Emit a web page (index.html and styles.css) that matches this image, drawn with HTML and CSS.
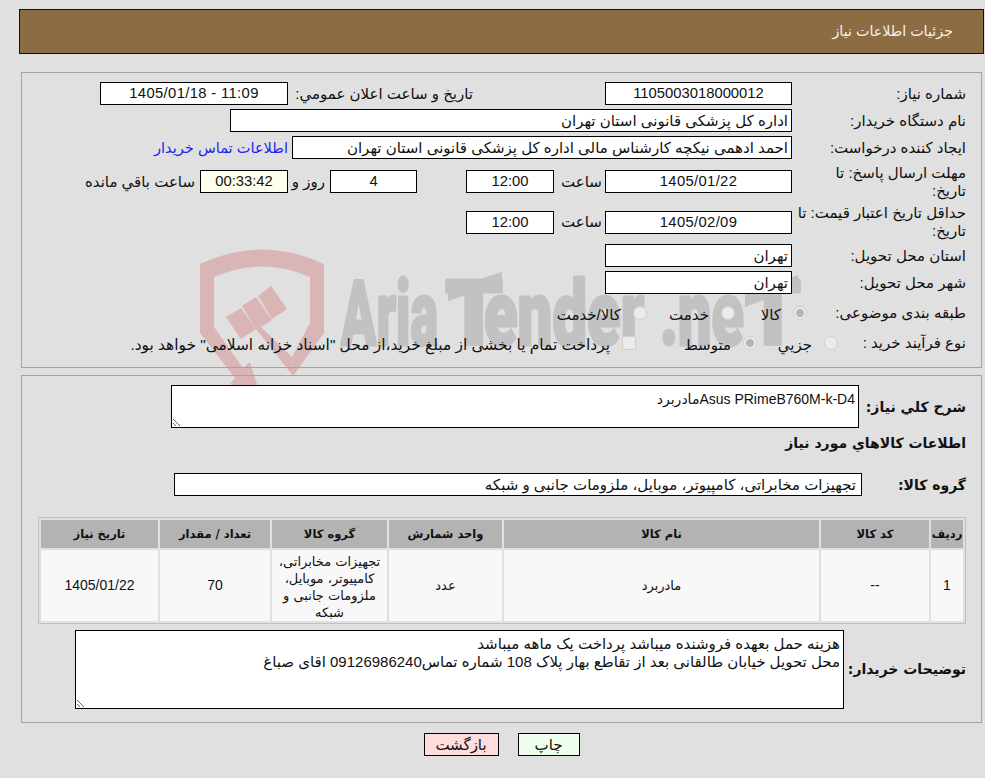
FILE: index.html
```html
<!DOCTYPE html>
<html lang="fa" dir="rtl">
<head>
<meta charset="utf-8">
<title>جزئیات اطلاعات نیاز</title>
<link rel="stylesheet" href="styles.css">
</head>
<body>
<svg class="watermark" width="985" height="778" viewBox="0 0 985 778" aria-hidden="true">
  <path class="wm-red" d="M200 264Q262 235 324 264V333L293 376L292 357L310 323V277Q262 256 214 277V327L243 368L250 362L262 400L230 384L235 378L200 333Z"/>
  <path class="wm-red" d="M226 317L241 308L256 329L241 339Z"/>
  <path class="wm-red" d="M258 296L271 286L287 309L272 319Z"/>
  <path class="wm-red" d="M242 306L256 297L272 320L261 327L292 357L293 376L256 329Z"/>
  <text class="wm-text" x="341" y="345" textLength="97" lengthAdjust="spacingAndGlyphs">Aria</text>
  <text class="wm-text" x="445" y="345" textLength="58" lengthAdjust="spacingAndGlyphs">T</text>
  <text class="wm-text" x="484" y="345" textLength="160" lengthAdjust="spacingAndGlyphs">ender</text>
  <text class="wm-text" x="660" y="345" textLength="84" lengthAdjust="spacingAndGlyphs">.ne</text>
  <text class="wm-text" x="745" y="345" textLength="56" lengthAdjust="spacingAndGlyphs">T</text>
  <path class="wm-gray" d="M448 289L502 272V284L448 301Z"/>
  <path class="wm-gray" d="M745 295L798 275V287L745 307Z"/>
</svg>

<header class="title-bar">جزئیات اطلاعات نیاز</header>

<section class="panel panel-form">
  <div class="lbl c-label r1">شماره نياز:</div>
  <div class="field num c-date r1">1105003018000012</div>
  <div class="lbl r1 c-pub">تاریخ و ساعت اعلان عمومي:</div>
  <div class="field num date c-pubdate r1">1405/01/18 - 11:09</div>

  <div class="lbl c-label r2">نام دستگاه خریدار:</div>
  <div class="field text c-org r2">اداره کل پزشکی قانونی استان تهران</div>

  <div class="lbl c-label r3">ایجاد کننده درخواست:</div>
  <div class="field text c-creator r3">احمد ادهمی نیکچه کارشناس مالی اداره کل پزشکی قانونی استان تهران</div>
  <a class="contact r3" href="#">اطلاعات تماس خریدار</a>

  <div class="lbl c-label r4">مهلت ارسال پاسخ: تا<br>تاریخ:</div>
  <div class="field num date c-date r4">1405/01/22</div>
  <div class="lbl c-hour r4">ساعت</div>
  <div class="field num c-time r4">12:00</div>
  <div class="field num c-days r4">4</div>
  <div class="lbl c-rooz r4">روز و</div>
  <div class="field num c-h r4 remain">00:33:42</div>
  <div class="lbl c-rest r4">ساعت باقي مانده</div>

  <div class="lbl c-label r5">حداقل تاریخ اعتبار قیمت: تا<br>تاریخ:</div>
  <div class="field num date c-date r5">1405/02/09</div>
  <div class="lbl c-hour r5">ساعت</div>
  <div class="field num c-time r5">12:00</div>

  <div class="lbl c-label r6">استان محل تحویل:</div>
  <div class="field text c-date r6">تهران</div>
  <div class="lbl c-label r7">شهر محل تحویل:</div>
  <div class="field text c-date r7">تهران</div>

  <div class="lbl c-label r8">طبقه بندی موضوعی:</div>
  <div class="options opts-top r8">
    <label class="opt opt-kala"><input class="radio" type="radio" name="cat" checked disabled><span>کالا</span></label>
    <label class="opt opt-khedmat"><input class="radio" type="radio" name="cat" disabled><span>خدمت</span></label>
    <label class="opt"><input class="radio" type="radio" name="cat" disabled><span>کالا/خدمت</span></label>
  </div>

  <div class="lbl c-label r9">نوع فرآیند خرید :</div>
  <div class="options opts-bottom r9">
    <label class="opt opt-jozi"><input class="radio" type="radio" name="proc" disabled><span>جزيي</span></label>
    <label class="opt opt-motavaset"><input class="radio" type="radio" name="proc" checked disabled><span>متوسط</span></label>
    <label class="opt opt-treasury"><input class="check" type="checkbox" disabled><span>پرداخت تمام یا بخشی از مبلغ خرید،از محل "اسناد خزانه اسلامی" خواهد بود.</span></label>
  </div>
</section>

<section class="panel panel-items">
  <div class="item-row desc-row">
    <div class="lbl-b">شرح كلي نياز:</div>
    <textarea class="area area-desc" readonly>Asus PRimeB760M-k-D4مادربرد</textarea>
  </div>
  <h2 class="lbl-b section-title">اطلاعات کالاهاي مورد نياز</h2>
  <div class="item-row group-row">
    <div class="lbl-b">گروه کالا:</div>
    <div class="field text group-field">تجهیزات مخابراتی، کامپیوتر، موبایل، ملزومات جانبی و شبکه</div>
  </div>
  <table class="items">
    <thead>
      <tr><th class="w-rad">ردیف</th><th class="w-code">کد کالا</th><th class="w-name">نام کالا</th><th class="w-unit">واحد شمارش</th><th class="w-group">گروه کالا</th><th class="w-qty">تعداد / مقدار</th><th class="w-date">تاریخ نیاز</th></tr>
    </thead>
    <tbody>
      <tr><td class="n">1</td><td class="n">--</td><td>مادربرد</td><td>عدد</td><td class="group-cell">تجهیزات مخابراتی، کامپیوتر، موبایل، ملزومات جانبی و شبکه</td><td class="n">70</td><td class="n">1405/01/22</td></tr>
    </tbody>
  </table>
  <div class="item-row note-row">
    <div class="lbl-b">توضیحات خریدار:</div>
    <textarea class="area area-note" readonly>هزینه حمل بعهده فروشنده میباشد پرداخت یک ماهه میباشد
محل تحویل خیابان طالقانی بعد از تقاطع بهار پلاک 108 شماره تماس09126986240 اقای صباغ</textarea>
  </div>
</section>

<div class="actions">
  <button class="btn btn-print" type="button">چاپ</button>
  <button class="btn btn-back" type="button">بازگشت</button>
</div>
</body>
</html>
```
FILE: styles.css
```css
* { box-sizing: border-box; }
html, body { margin: 0; padding: 0; }
body {
  position: relative;
  height: 778px;
  overflow: hidden;
  background: #e0e0e0;
  color: #111;
  font: 15px/18px "Liberation Sans", "DejaVu Sans", sans-serif;
}
.watermark { position: absolute; left: 0; top: 0; z-index: -1; direction: ltr; }
.wm-red { fill: #d9b5b6; }
.wm-gray { fill: #c2c2c2; }
.wm-text { fill: #c2c2c2; stroke: #c2c2c2; stroke-width: 3px; stroke-linejoin: round; font: 900 90px Roboto, sans-serif; }

.title-bar {
  margin: 9px 1px 0 19px;
  height: 45px;
  padding: 0 30px 0 0;
  background: #8c6c42;
  border: 1px solid #111;
  color: #f4f1ea;
  font-size: 14.3px;
  line-height: 43px;
}
.panel {
  margin: 0 3px 0 21px;
  border: 1px solid #a3a3a3;
  padding-right: 15px;
}
.panel-form {
  margin-top: 18px;
  height: 296px;
  padding-top: 9px;
  display: grid;
  grid-template-columns: 174px 187px 51px 88px 49px 87px 42px 88px 1fr;
  grid-template-rows: 23px 23px 23px 37px 36px 23px 23px 30px 22px;
  row-gap: 4px;
  align-items: center;
}
.r1 { grid-row: 1; } .r2 { grid-row: 2; } .r3 { grid-row: 3; }
.r4 { grid-row: 4; } .r5 { grid-row: 5; } .r6 { grid-row: 6; }
.r7 { grid-row: 7; } .r8 { grid-row: 8; } .r9 { grid-row: 9; }
.c-label { grid-column: 1; white-space: nowrap; }
.c-date { grid-column: 2; }
.c-hour { grid-column: 3; text-align: center; padding-left: 4px; }
.c-time { grid-column: 4; }
.c-days { grid-column: 6; }
.c-rooz { grid-column: 7; padding-right: 5px; white-space: nowrap; }
.c-h { grid-column: 8; }
.c-rest { grid-column: 9; padding-right: 5px; white-space: nowrap; }
.c-pub { grid-column: 3 / 8; padding-right: 132px; white-space: nowrap; }
.c-pubdate { grid-column: 8 / 10; margin-left: 78px; }
.c-org { grid-column: 2 / 10; margin-left: 208px; }
.c-creator { grid-column: 2 / 8; margin-left: 4px; }
.contact { grid-column: 8 / 10; color: #1e1ef0; font-size: 14.6px; text-decoration: none; white-space: nowrap; }

.field {
  height: 23px;
  background: #fff;
  border: 1px solid #000;
  white-space: nowrap;
  overflow: hidden;
}
.num { font-size: 14.8px; line-height: 21px; text-align: center; direction: ltr; }
.date { letter-spacing: .35px; }
.text { line-height: 21px; padding: 0 3px; }
.remain { background: #ffffee; }

.options { display: flex; grid-column: 1 / -1; align-items: center; }
.opts-top { grid-column: 2 / -1; margin-right: -15px; }
.opts-bottom { margin-right: 128px; }
.opt { display: flex; align-items: center; gap: 12px; white-space: nowrap; }
.opt span { margin-top: 3px; }
.opt-kala { width: 72px; }
.opt-khedmat { width: 88px; }
.opt-jozi { width: 81px; }
.opt-motavaset { width: 121px; }
.opt-treasury span { font-size: 15.4px; }
.radio, .check {
  appearance: none;
  flex: none;
  width: 14px;
  height: 14px;
  margin: 0;
  background: #ebebeb;
  border: 1px solid #cfcfcf;
}
.radio { border-radius: 50%; }
.radio:checked { background: radial-gradient(circle, #b5b5b5 0 3.5px, #ebebeb 4.5px); }
.check { border-radius: 2px; }

.panel-items { margin-top: 7px; height: 348px; padding: 9px 15px 0 16px; }
.lbl-b { font: 700 14px/20px "DejaVu Sans", sans-serif; color: #111; white-space: nowrap; }
.item-row { display: flex; align-items: center; }
.desc-row { height: 43px; gap: 5px; }
.desc-row .lbl-b { width: 102px; }
.section-title { margin: 5px 0 0; height: 20px; }
.group-row { margin-top: 20px; height: 23px; }
.group-row .lbl-b { width: 104px; }
.group-field { width: 688px; padding-right: 5px; }
.area {
  display: block;
  background: #fff;
  border: 1px solid #000;
  border-radius: 0;
  font: 15px/18px "Liberation Sans", "DejaVu Sans", sans-serif;
  color: #111;
  padding: 4px 3px 3px;
  margin: 0;
  outline: none;
}
.area-desc { width: 688px; height: 43px; font-size: 14px; }
.area-note { width: 769px; height: 79px; }
.items {
  display: table;
  margin: 21px 0 0 0;
  width: 928px;
  border: 1px solid #c0c0c0;
  border-spacing: 2px;
  table-layout: fixed;
  text-align: center;
}
.items th { height: 28px; padding: 0; background: #b3b3b3; font: 700 11.5px "DejaVu Sans", sans-serif; color: #111; }
.items td { height: 71px; padding: 0 1px; background: #f8f8f8; font: 13px/17px "DejaVu Sans", sans-serif; }
.items td.n { font: 14px/17px "Liberation Sans", sans-serif; }
.items td.group-cell { padding: 3px 4px 0; }
.w-rad { width: 32px; } .w-code { width: 108px; } .w-name { width: 315px; }
.w-unit { width: 113px; } .w-group { width: 115px; } .w-qty { width: 110px; } .w-date { width: 117px; }
.note-row { margin-top: 6px; height: 78px; }
.note-row .lbl-b { width: 122px; }

.actions { display: flex; justify-content: center; gap: 19px; margin: 10px 0 0 0; padding-left: 18px; }
.btn {
  height: 23px;
  padding: 0;
  border: 1px solid #000;
  border-radius: 0;
  font: 15px/20px "Liberation Sans", "DejaVu Sans", sans-serif;
  color: #111;
}
.btn-print { width: 62px; background: #eeffee; }
.btn-back { width: 75px; background: #ffdddd; }
```
